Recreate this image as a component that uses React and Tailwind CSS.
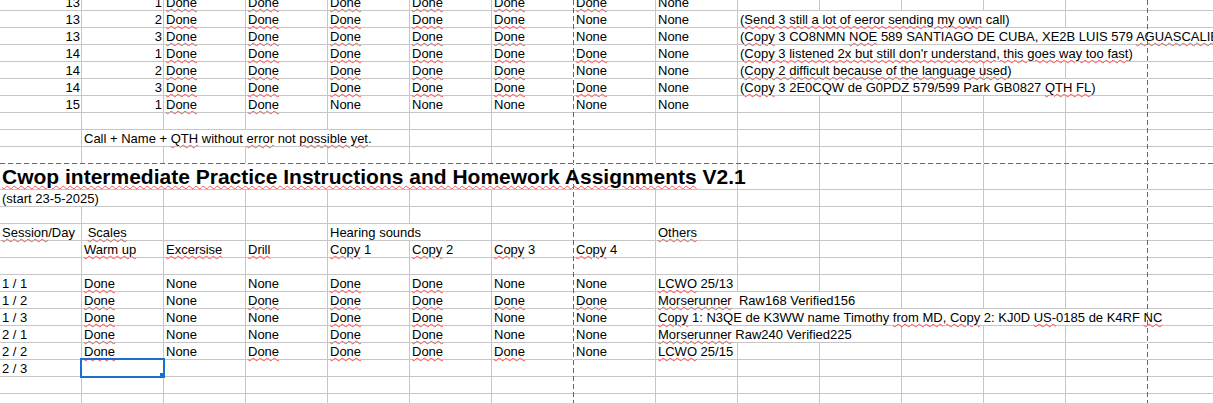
import React from 'react';

const U = ({ children }) => (
  <span className="underline decoration-wavy decoration-[#f05555] decoration-1 underline-offset-[1px]">{children}</span>
);

const D = <U>Done</U>;
const N = 'None';

const WIDTHS = {
  1: 'w-[82px]',
  2: 'w-[164px]',
  3: 'w-[246px]',
  4: 'w-[328px]',
  5: 'w-[410px]',
  6: 'w-[492px]',
  7: 'w-[574px]',
  9: 'w-[738px]',
};

const S = (t, span) => ({ __cell: true, t, span });
const R = (t) => ({ __cell: true, t, r: true });
const SEL = { __cell: true, t: null, sel: true };

function norm(items) {
  const out = items.map((it) =>
    it && typeof it === 'object' && it.__cell ? it : { t: it, span: 1 }
  );
  let total = out.reduce((a, c) => a + (c.span || 1), 0);
  while (total < 15) {
    out.push({ t: null, span: 1 });
    total += 1;
  }
  return out;
}

function Cell({ c }) {
  const span = c.span || 1;
  return (
    <div
      className={`${WIDTHS[span]} shrink-0 relative border-r border-b border-[#c6c6c6] flex items-end whitespace-pre ${
        c.r ? 'justify-end pr-[1px]' : 'pl-[2px]'
      }`}
    >
      {c.t != null && <span className="relative z-10">{c.t}</span>}
      {c.sel && (
        <div className="absolute -left-[2px] -top-[2px] w-[85px] h-[20px] border-2 border-[#1a6fd1] z-20">
          <div className="absolute -right-[2px] -bottom-[2px] w-[5px] h-[5px] bg-[#1a6fd1]" />
        </div>
      )}
    </div>
  );
}

function Row({ items, tall, title }) {
  const cells = norm(items);
  return (
    <div
      className={`flex shrink-0 ${tall ? 'h-[26px]' : 'h-[17px]'} ${
        title ? 'text-[21px] leading-[24px] font-bold' : ''
      }`}
    >
      {cells.map((c, i) => (
        <Cell key={i} c={c} />
      ))}
    </div>
  );
}

export default function App() {
  const top = [
    [R('13'), R('1'), D, D, D, D, D, D, N],
    [R('13'), R('2'), D, D, D, D, D, N, N,
      S(<>(<U>Send 3 still a lot of eeror sending my own</U> call)</>, 4)],
    [R('13'), R('3'), D, D, D, D, D, N, N,
      S(<>(<U>Copy</U> 3 CO8NMN <U>NOE</U> 589 SANTIAGO DE CUBA, XE2B LUIS 579 <U>AGUASCALIENTES</U>)</>, 6)],
    [R('14'), R('1'), D, D, D, D, D, D, N,
      S(<>(<U>Copy 3 listened 2x but still don'r understand, this goes way too fast</U>)</>, 5)],
    [R('14'), R('2'), D, D, D, D, D, N, N,
      S(<>(<U>Copy 2 difficult because of the language used</U>)</>, 3)],
    [R('14'), R('3'), D, D, D, D, D, D, N,
      S(<>(<U>Copy</U> 3 2E0CQW de G0PDZ 579/599 Park GB0827 <U>QTH FL</U>)</>, 5)],
    [R('15'), R('1'), D, D, N, N, N, N, N],
    [],
    [null, S(<>Call + Name + <U>QTH</U> without <U>error</U> not <U>possible yet</U>.</>, 4)],
    [],
  ];

  const bottom = [
    [S('(start 23-5-2025)', 2)],
    [],
    [<><U>Session</U>/Day</>, <> <U>Scales</U></>, null, null, S('Hearing sounds', 2), null, null, <U>Others</U>],
    [null, <U>Warm up</U>, <U>Excersise</U>, <U>Drill</U>,
      <><U>Copy</U> 1</>, <><U>Copy</U> 2</>, <><U>Copy</U> 3</>, <><U>Copy</U> 4</>],
    [],
    ['1 / 1', D, N, N, D, D, N, N, <><U>LCWO</U> 25/13</>],
    ['1 / 2', D, N, D, D, D, D, D, S(<><U>Morserunner</U>  Raw168 Verified156</>, 3)],
    ['1 / 3', D, N, N, D, D, N, N,
      S(<><U>Copy</U> 1: N3QE de K3WW name Timothy <U>from MD, Copy</U> 2: KJ0D <U>US-</U>0185 de K4RF <U>NC</U></>, 7)],
    ['2 / 1', D, N, N, D, D, N, N, S(<><U>Morserunner</U> Raw240 Verified225</>, 3)],
    ['2 / 2', D, N, D, D, D, D, N, <><U>LCWO</U> 25/15</>],
    ['2 / 3', SEL],
    [],
    [],
  ];

  return (
    <div className="relative w-[1213px] h-[403px] overflow-hidden bg-white text-black font-['Liberation_Sans',Arial,sans-serif] text-[13px] leading-[14px]">
      <div className="flex flex-col -mt-[6px]">
        {top.map((r, i) => (
          <Row key={'t' + i} items={r} />
        ))}
        <Row
          tall
          title
          items={[S(<><U>Cwop intermediate Practice Instructions and Homework Assignments</U> V2.1</>, 9)]}
        />
        {bottom.map((r, i) => (
          <Row key={'b' + i} items={r} />
        ))}
      </div>

      {/* page break indicators */}
      <div className="absolute left-[573px] top-0 w-px h-full z-0 bg-[repeating-linear-gradient(to_bottom,#666_0px,#666_5px,#fff_5px,#fff_8px)]" />
      <div className="absolute left-[1147px] top-0 w-px h-full z-0 bg-[repeating-linear-gradient(to_bottom,#666_0px,#666_5px,#fff_5px,#fff_8px)]" />
      <div className="absolute left-0 top-[163px] w-full h-px z-0 bg-[repeating-linear-gradient(to_right,#666_0px,#666_5px,#fff_5px,#fff_8px)]" />
    </div>
  );
}
